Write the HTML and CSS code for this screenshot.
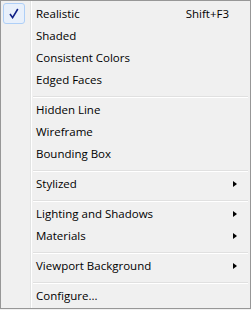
FILE: index.html
```html
<!DOCTYPE html>
<html lang="en">
<head>
    <meta charset="UTF-8">
    <meta name="viewport" content="width=device-width, initial-scale=1.0">
    <title>Visual Styles Menu</title>
    <link rel="stylesheet" href="styles.css">
</head>
<body>

    <div class="menu">
        <div class="item checked">
            <span class="check">
                <svg width="10" height="11" viewBox="0 0 10 11"><path d="M1 6 L3.6 9.6 L8.8 1" fill="none" stroke="#0f1f86" stroke-width="1.6"/></svg>
            </span>
            <span class="label">Realistic</span>
            <span class="shortcut">Shift+F3</span>
        </div>
        <div class="item"><span class="label">Shaded</span></div>
        <div class="item"><span class="label">Consistent Colors</span></div>
        <div class="item"><span class="label">Edged Faces</span></div>

        <div class="sep"></div>

        <div class="item"><span class="label">Hidden Line</span></div>
        <div class="item"><span class="label">Wireframe</span></div>
        <div class="item"><span class="label">Bounding Box</span></div>

        <div class="sep"></div>

        <div class="item sub"><span class="label">Stylized</span><span class="arrow"></span></div>

        <div class="sep"></div>

        <div class="item sub"><span class="label">Lighting and Shadows</span><span class="arrow"></span></div>
        <div class="item sub"><span class="label">Materials</span><span class="arrow"></span></div>

        <div class="sep"></div>

        <div class="item sub"><span class="label">Viewport Background</span><span class="arrow"></span></div>

        <div class="sep"></div>

        <div class="item"><span class="label">Configure...</span></div>
    </div>

</body>
</html>
```

FILE: styles.css
```css
body {
    margin: 0;
    background-color: #f0f0f0;
    font-family: "Open Sans", "Noto Sans", sans-serif;
    font-size: 11.5px;
    color: #000;
}

.menu {
    width: 251px;
    height: 309px;
    box-sizing: border-box;
    border: 1px solid #979797;
    padding: 2px 2px 1px 2px;
    background: linear-gradient(to right,
        transparent 29px, #e2e3e3 29px, #e2e3e3 30px,
        #ffffff 30px, #ffffff 31px, transparent 31px), #f0f0f0;
}

.item {
    position: relative;
    display: flex;
    align-items: center;
    box-sizing: border-box;
    height: 22px;
    padding: 0 10px 1px 33px;
}

.label {
    flex: 1;
    white-space: nowrap;
}

.shortcut {
    margin-right: 9px;
}

.check {
    position: absolute;
    left: 0;
    top: 0;
    width: 20px;
    height: 19px;
    border: 1px solid #aecff7;
    border-radius: 3px;
    background-color: #e8f0fb;
    display: flex;
    align-items: center;
    justify-content: center;
}

.arrow {
    width: 0;
    height: 0;
    border-top: 3.5px solid transparent;
    border-bottom: 3.5px solid transparent;
    border-left: 4px solid #000;
    margin-right: 1px;
}

.sep {
    height: 8px;
    box-sizing: border-box;
    padding-top: 5px;
    margin-left: 30px;
}

.sep::before {
    content: "";
    display: block;
    height: 1px;
    background-color: #e0e0e0;
    border-bottom: 1px solid #ffffff;
}
```
